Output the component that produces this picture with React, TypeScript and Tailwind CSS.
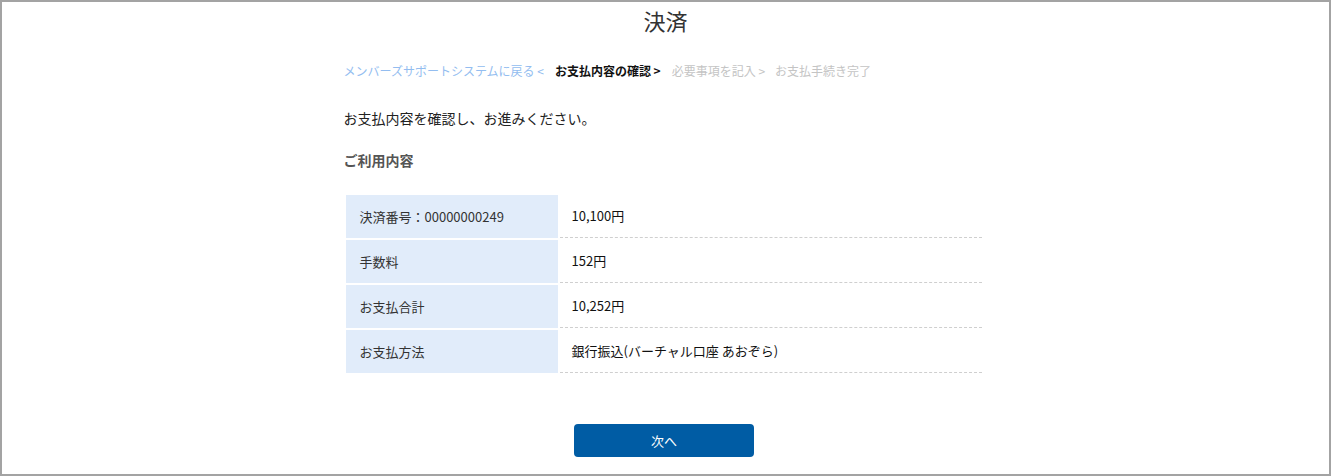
const rows = [
  { label: "決済番号：00000000249", value: "10,100円" },
  { label: "手数料", value: "152円" },
  { label: "お支払合計", value: "10,252円" },
  { label: "お支払方法", value: "銀行振込(バーチャル口座 あおぞら)" },
];

const App = () => {
  return (
    <div
      className="h-[476px] border-2 border-[#a3a3a3] bg-white text-[#333]"
      style={{ fontFamily: '"Noto Sans CJK JP", "Noto Sans", sans-serif' }}
    >
      <h1 className="pt-[2px] text-center text-[22px] leading-[32px] font-normal text-[#333]">
        決済
      </h1>
      <div className="mx-auto w-[644px]">
        <nav className="mt-[26px] flex items-center text-[12px] leading-[18px]">
          <a className="text-[#93bdf0]">メンバーズサポートシステムに戻る &lt;</a>
          <span className="ml-[11px] font-bold text-[#111]">お支払内容の確認 &gt;</span>
          <span className="ml-[11px] text-[#c4c4c4]">必要事項を記入 &gt;</span>
          <span className="ml-[10px] text-[#c4c4c4]">お支払手続き完了</span>
        </nav>

        <p className="mt-[28px] text-[14px] leading-[20px] text-[#222]">
          お支払内容を確認し、お進みください。
        </p>

        <h2 className="mt-[22px] text-[14px] leading-[20px] font-bold text-[#555]">
          ご利用内容
        </h2>

        <table className="mt-[23px] w-[640px] border-separate border-spacing-[2px] text-[13px]">
          <tbody>
            {rows.map((row) => (
              <tr key={row.label}>
                <th className="h-[43px] w-[212px] bg-[#e1ecfa] pl-[14px] text-left font-normal text-[#333]">
                  {row.label}
                </th>
                <td className="h-[43px] border-b border-dashed border-[#cfcfcf] pl-[12px] text-[#111]">
                  {row.value}
                </td>
              </tr>
            ))}
          </tbody>
        </table>

        <div className="mt-[49px] flex justify-center">
          <button className="ml-[-3px] h-[33px] w-[180px] rounded-[4px] bg-[#005ca4] text-[13px] text-white">
            次へ
          </button>
        </div>
      </div>
    </div>
  );
};

export default App;
